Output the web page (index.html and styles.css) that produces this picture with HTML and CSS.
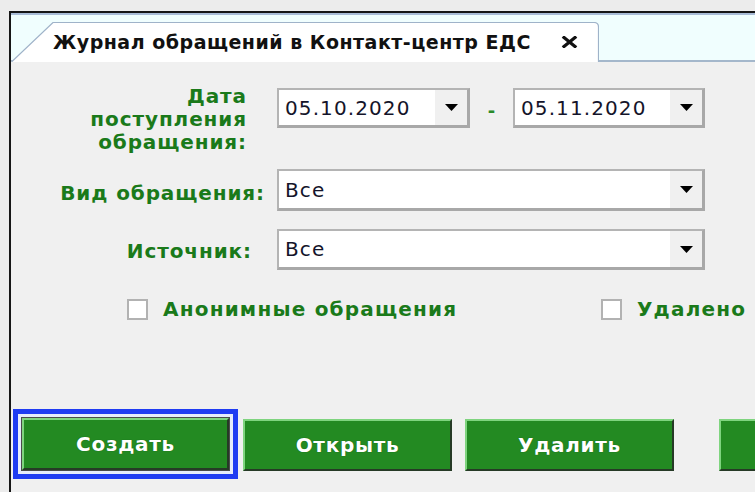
FILE: index.html
```html
<!DOCTYPE html>
<html lang="ru">
<head>
<meta charset="utf-8">
<title>Журнал обращений в Контакт-центр ЕДС</title>
<link rel="stylesheet" href="styles.css">
</head>
<body>
<div class="window">
  <div class="tabstrip">
    <div class="tab">
      <svg class="tab-shape" width="588" height="40" viewBox="0 0 588 40" aria-hidden="true">
        <path d="M0 40 L42 0.5 H583 Q587.5 0.5 587.5 5 V40 Z" fill="#ffffff"/>
        <path d="M0.5 40 L42 0.5 H583 Q587.5 0.5 587.5 5 V40" fill="none" stroke="#9fb3c9" stroke-width="1.2"/>
      </svg>
      <span class="tab-title">Журнал обращений в Контакт-центр ЕДС</span>
      <svg class="tab-close" width="17" height="12" viewBox="0 0 17 12" aria-hidden="true">
        <path d="M3 1.5 L14 10.5 M14 1.5 L3 10.5" stroke="#111" stroke-width="3.2" stroke-linecap="square"/>
      </svg>
    </div>
  </div>

  <div class="form">
    <div class="row row-date">
      <div class="label label-date">Дата<br>поступления<br>обращения:</div>
      <div class="combo combo-date">
        <span class="combo-text">05.10.2020</span>
        <span class="combo-btn"><svg width="13" height="7" viewBox="0 0 13 7"><path d="M0 0 H13 L6.5 7 Z" fill="#000"/></svg></span>
      </div>
      <span class="dash">-</span>
      <div class="combo combo-date combo-date2">
        <span class="combo-text">05.11.2020</span>
        <span class="combo-btn"><svg width="13" height="7" viewBox="0 0 13 7"><path d="M0 0 H13 L6.5 7 Z" fill="#000"/></svg></span>
      </div>
    </div>

    <div class="row row-kind">
      <div class="label label-kind">Вид обращения:</div>
      <div class="combo combo-wide">
        <span class="combo-text">Все</span>
        <span class="combo-btn"><svg width="13" height="7" viewBox="0 0 13 7"><path d="M0 0 H13 L6.5 7 Z" fill="#000"/></svg></span>
      </div>
    </div>

    <div class="row row-source">
      <div class="label label-source">Источник:</div>
      <div class="combo combo-wide combo-source">
        <span class="combo-text">Все</span>
        <span class="combo-btn"><svg width="13" height="7" viewBox="0 0 13 7"><path d="M0 0 H13 L6.5 7 Z" fill="#000"/></svg></span>
      </div>
    </div>

    <div class="row row-checks">
      <label class="check check-anon"><span class="box"></span><span class="check-text">Анонимные обращения</span></label>
      <label class="check"><span class="box"></span><span class="check-text">Удалено</span></label>
    </div>

    <div class="row row-buttons">
      <div class="focus-ring"><button class="btn btn-default">Создать</button></div>
      <button class="btn btn-open">Открыть</button>
      <button class="btn btn-delete">Удалить</button>
      <button class="btn btn-more" aria-label="Ещё"></button>
    </div>
  </div>
</div>
</body>
</html>
```
FILE: styles.css
```css
html, body {
  margin: 0;
  padding: 0;
  height: 100%;
}

body {
  background: #ececec;
  font-family: "DejaVu Sans", Verdana, sans-serif;
  overflow: hidden;
}

.window {
  margin: 11px 0 0 9px;
  height: 481px;
  border-top: 2px solid #161616;
  border-left: 2px solid #161616;
  background: #f0f0f0;
  overflow: hidden;
  box-sizing: border-box;
}

/* tab strip */
.tabstrip {
  height: 49px;
  box-sizing: border-box;
  border-top: 2px solid #a9bcd7;
  border-bottom: 2px solid #a4b7cb;
  background: #f0fefe;
  display: flex;
  align-items: flex-end;
}

.tab {
  position: relative;
  width: 588px;
  height: 40px;
  margin-bottom: -2px;
  display: flex;
  align-items: center;
  box-sizing: border-box;
  padding-left: 42px;
}

.tab-shape {
  position: absolute;
  left: 0;
  top: 0;
  z-index: 0;
}

.tab-title {
  position: relative;
  font-weight: bold;
  font-size: 19px;
  letter-spacing: 0.5px;
  color: #111;
  line-height: 40px;
  white-space: nowrap;
}

.tab-close {
  position: relative;
  margin-left: 30px;
  flex: none;
}

/* form */
.form {
  padding-top: 26px;
}

.row {
  display: flex;
}

.label {
  color: #1a7a1a;
  font-weight: bold;
  font-size: 20px;
  letter-spacing: 0.9px;
  text-align: right;
  box-sizing: border-box;
  white-space: nowrap;
}

.row-date {
  height: 81px;
  align-items: flex-start;
}

.label-date {
  width: 236px;
  margin-right: 30px;
  margin-top: -3px;
  line-height: 23px;
}

.combo {
  background: #fff;
  box-sizing: border-box;
  border-top: 2px solid #b4b4b4;
  border-left: 2px solid #b4b4b4;
  border-right: 3px solid #a8a8a8;
  border-bottom: 3px solid #a8a8a8;
  display: flex;
  align-items: center;
}

.combo-text {
  flex: 1;
  padding-left: 6px;
  font-size: 20px;
  letter-spacing: 1.1px;
  color: #14142a;
}

.combo-btn {
  width: 32px;
  align-self: stretch;
  background: #f0f0f0;
  display: flex;
  align-items: center;
  justify-content: center;
}

.combo-date {
  width: 193px;
  height: 40px;
}

.dash {
  width: 43px;
  text-align: center;
  color: #2a8a2a;
  font-weight: bold;
  font-size: 18px;
  line-height: 40px;
  padding-top: 3px;
  box-sizing: border-box;
}

.combo-date2 {
  width: 192px;
}

.row-kind {
  height: 42px;
  align-items: center;
}

.label-kind {
  width: 254px;
  margin-right: 12px;
  padding-top: 6px;
}

.combo-wide {
  width: 428px;
  height: 42px;
}

.row-source {
  margin-top: 18px;
  height: 41px;
  align-items: center;
}

.label-source {
  width: 241px;
  margin-right: 25px;
  padding-top: 3px;
}

.combo-source {
  height: 41px;
}

/* checkboxes */
.row-checks {
  margin-top: 27px;
  padding-left: 116px;
  align-items: center;
}

.check {
  display: flex;
  align-items: center;
  color: #1a7a1a;
  font-weight: bold;
  font-size: 20px;
  letter-spacing: 1.2px;
  white-space: nowrap;
}

.check-anon {
  width: 474px;
}

.box {
  width: 21px;
  height: 21px;
  box-sizing: border-box;
  border: 2px solid #b2b2b2;
  background: #fff;
  margin-right: 15px;
  flex: none;
}

/* buttons */
.row-buttons {
  margin-top: 88px;
  padding-left: 2px;
  align-items: flex-start;
}

.focus-ring {
  border: 5px solid #1f3cf2;
  padding: 3px;
  background: #e6ecfb;
  flex: none;
}

.btn {
  flex: none;
  width: 209px;
  height: 52px;
  box-sizing: border-box;
  margin: 0;
  padding: 0;
  background: #238a22;
  color: #fff;
  font-family: "DejaVu Sans", Verdana, sans-serif;
  font-weight: bold;
  font-size: 20px;
  letter-spacing: 0.7px;
  border-top: 2px solid #7fd47f;
  border-left: 2px solid #7fd47f;
  border-right: 2px solid #263a26;
  border-bottom: 2px solid #263a26;
  text-shadow: 0 0 1px rgba(0, 60, 0, 0.6);
}

.btn-default {
  width: 207px;
  height: 52px;
  outline: 1px solid #4a4a4a;
  margin: 1px;
}

.btn-open {
  margin-left: 5px;
  margin-top: 10px;
}

.btn-delete {
  margin-left: 13px;
  margin-top: 10px;
}

.btn-more {
  margin-left: 45px;
  margin-top: 10px;
}
```
